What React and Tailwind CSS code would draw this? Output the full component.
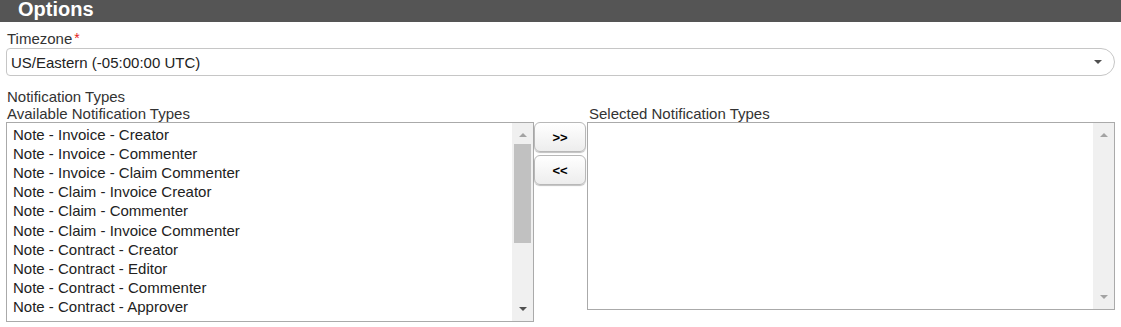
import React from "react";

const availableTypes = [
  "Note - Invoice - Creator",
  "Note - Invoice - Commenter",
  "Note - Invoice - Claim Commenter",
  "Note - Claim - Invoice Creator",
  "Note - Claim - Commenter",
  "Note - Claim - Invoice Commenter",
  "Note - Contract - Creator",
  "Note - Contract - Editor",
  "Note - Contract - Commenter",
  "Note - Contract - Approver",
];

const UpArrow = ({ dark }) => (
  <div
    className={`h-0 w-0 border-x-[4px] border-b-[4px] border-x-transparent ${
      dark ? "border-b-[#505050]" : "border-b-[#a3a3a3]"
    }`}
  />
);

const DownArrow = ({ dark }) => (
  <div
    className={`h-0 w-0 border-x-[4px] border-t-[4px] border-x-transparent ${
      dark ? "border-t-[#505050]" : "border-t-[#a3a3a3]"
    }`}
  />
);

// fake scrollbar, drawn so it looks like the old windows one
const ScrollTrack = ({ withThumb }) => (
  <div className="flex w-[21px] shrink-0 flex-col bg-[#f0f0f0]">
    <div className="flex h-[21px] justify-center pt-[10px]">
      <UpArrow />
    </div>
    {withThumb && <div className="mx-[2px] h-[99px] bg-[#c1c1c1]" />}
    <div className="flex-1" />
    <div className="flex h-[17px] justify-center pt-[3px]">
      <DownArrow dark={withThumb} />
    </div>
  </div>
);

const MoveButton = ({ label }) => (
  <button className="flex h-[30px] w-[52px] items-center justify-center rounded-[6px] border border-[#b8b8b8] bg-linear-to-b from-white to-[#ededed] text-[13px] font-bold leading-none text-black shadow-[0_1px_1px_rgba(0,0,0,0.25)]">
    {label}
  </button>
);

export default function App() {
  return (
    <div className="h-[327px] w-[1121px] overflow-hidden bg-white font-['Liberation_Sans',Arial,sans-serif] text-[15px] text-[#333]">
      <div className="h-[22px] bg-[#555555] pl-[18px] text-[20px] font-bold leading-[19px] text-white">
        Options
      </div>

      <div className="px-[6px]">
        <div className="mt-[8px] pl-[1px] leading-[17px]">
          Timezone
          <span className="relative -top-[1px] ml-[2px] text-[14px] text-[#e42020]">*</span>
        </div>

        <div className="flex h-[28px] items-start justify-between rounded-l-[4px] rounded-r-[14px] border border-[#c6c6c6] pl-[4px] pr-[12px]">
          <span className="pt-[5px] leading-[17px] text-[#222]">US/Eastern (-05:00:00 UTC)</span>
          <div className="pt-[11px]">
            <DownArrow dark />
          </div>
        </div>

        <div className="mt-[12px] pl-[1px] leading-[17px]">Notification Types</div>

        <div className="grid grid-cols-[528px_53px_528px]">
          <div className="flex flex-col">
            <div className="pl-[1px] leading-[17px]">Available Notification Types</div>
            <div className="flex h-[200px] border border-[#aaaaaa]">
              <ul className="flex-1 overflow-hidden pl-[6px] pt-[1.5px] leading-[19.2px] text-[#222]">
                {availableTypes.map((t) => (
                  <li key={t} className="whitespace-nowrap">
                    {t}
                  </li>
                ))}
              </ul>
              <ScrollTrack withThumb />
            </div>
          </div>

          <div className="flex flex-col gap-[3px] pt-[17px]">
            <MoveButton label=">>" />
            <MoveButton label="<<" />
          </div>

          <div className="flex flex-col">
            <div className="pl-[2px] leading-[17px]">Selected Notification Types</div>
            <div className="flex h-[188px] border border-[#aaaaaa]">
              <div className="flex-1" />
              <ScrollTrack />
            </div>
          </div>
        </div>
      </div>
    </div>
  );
}
